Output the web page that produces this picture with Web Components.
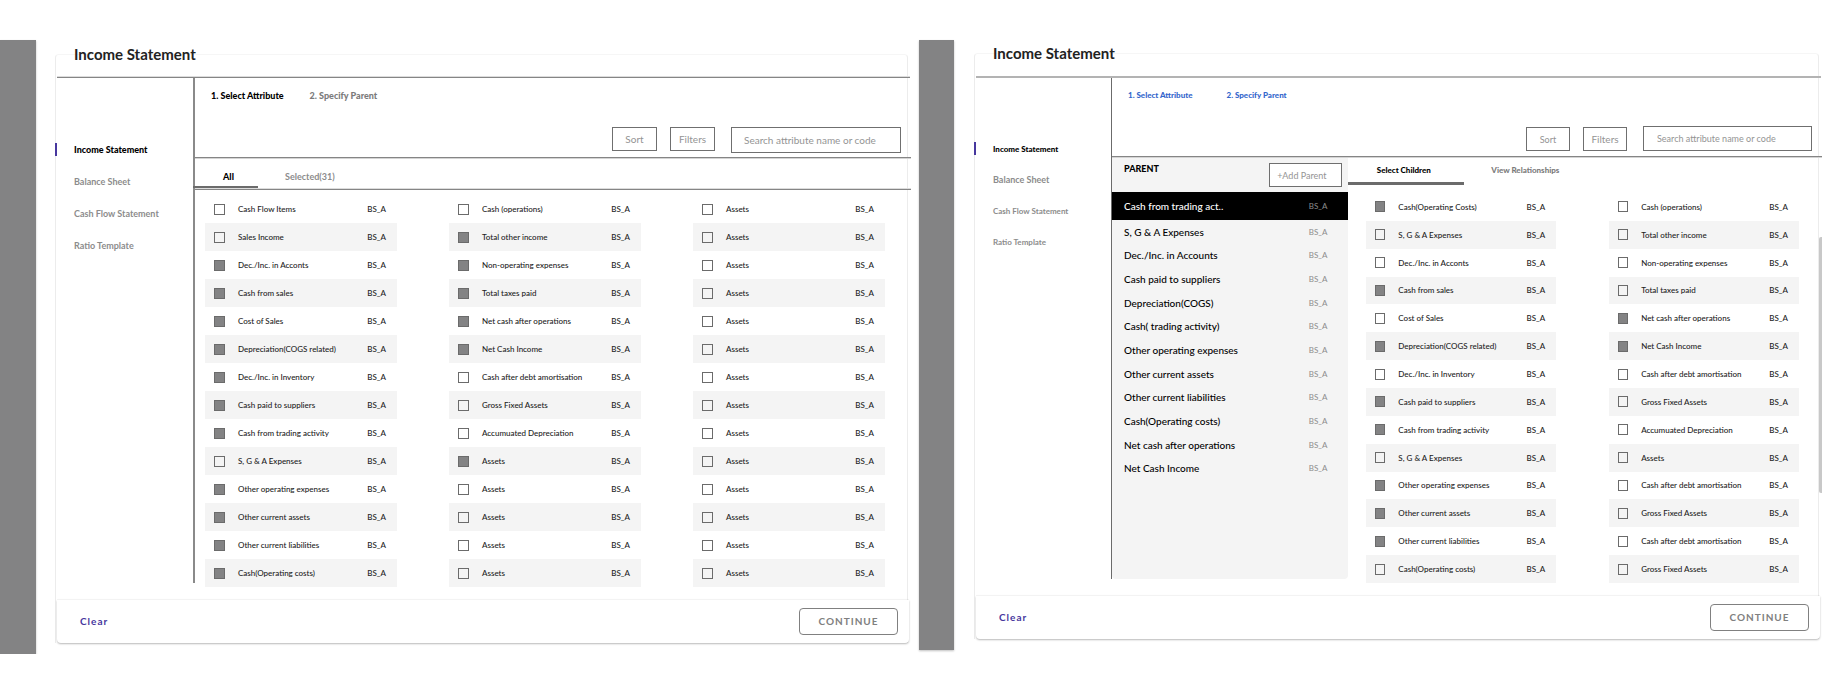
<!doctype html>
<html lang="en">
<head>
<meta charset="utf-8">
<title>Income Statement attributes</title>
<style>
  body { margin: 0; background: #fff; font-family: Lato, "Open Sans", sans-serif; color: #000; }
  main { display: grid; grid-template-columns: 919fr 903fr; align-items: start; padding-top: 40px; }
</style>
</head>
<body>
<main>
  <art-board style="--strip: 36px; --before: 19px; --after: 11px">
    <statement-card style="--top: 14px; --header: 21px; --nav: 137px; --nav-line: 2px; --nav-row: 32px; --steps: 36px">
      <a slot="nav" href="#income" class="active">Income Statement</a>
      <a slot="nav" href="#balance">Balance Sheet</a>
      <a slot="nav" href="#cashflow">Cash Flow Statement</a>
      <a slot="nav" href="#ratio">Ratio Template</a>
      <step-links slot="steps" mode="first"></step-links>
      <tool-bar slot="tools" style="--search-width: 170px; --search-height: 26px; --button: 45px; --align: flex-start; --pad-top: 13px; --pad-bottom: 4px"></tool-bar>
      <attribute-picker></attribute-picker>
    </statement-card>
  </art-board>
  <art-board style="--strip: 35px; --before: 20px; --after: 3px" scroll>
    <statement-card style="--top: 13px; --header: 22px; --nav: 136px; --nav-line: 1px; --nav-row: 31px; --steps: 34px; --header-dark: #b3b3b3; --header-light: #b3b3b3" compact>
      <a slot="nav" href="#income2" class="active">Income Statement</a>
      <a slot="nav" href="#balance2">Balance Sheet</a>
      <a slot="nav" href="#cashflow2" class="small">Cash Flow Statement</a>
      <a slot="nav" href="#ratio2" class="small">Ratio Template</a>
      <step-links slot="steps" mode="links"></step-links>
      <tool-bar slot="tools" compact style="--search-width: 169px; --search-height: 25px; --button: 44px; --align: flex-end; --pad-top: 14px; --pad-bottom: 5px"></tool-bar>
      <parent-editor></parent-editor>
    </statement-card>
  </art-board>
</main>

<script>
const define = (name, render) => customElements.define(name, class extends HTMLElement {
  constructor() { super(); this.attachShadow({ mode: 'open' }); }
  connectedCallback() { this.shadowRoot.innerHTML = render(this); }
});

/* Grey side strip, a card, and an optional scroll thumb in the right gutter */
define('art-board', el => `
  <style>
    :host { display: grid; grid-template-columns: var(--strip) minmax(0, 1fr) var(--after); column-gap: 0; }
    .strip { background: #838384; box-shadow: 0 1px 2px rgba(0,0,0,.25); }
    .body { padding-left: var(--before); }
    .thumb { margin-top: 197px; height: 256px; background: #c8c8c8; border-radius: 2px 0 0 2px; }
  </style>
  <div class="strip"></div>
  <div class="body"><slot></slot></div>
  <div>${el.hasAttribute('scroll') ? '<div class="thumb"></div>' : ''}</div>`);

define('statement-card', () => `
  <style>
    :host { display: block; margin: var(--top) 0 11px; border: 1px solid #ececec; border-top-color: #f6f6f6; border-bottom: 0; border-radius: 4px 4px 0 0; }
    header { height: var(--header); margin: 0 -3px 0 1px; border-bottom: 1px solid var(--header-dark, #858585); box-shadow: inset 0 -1px var(--header-light, #dcdcdc); padding-bottom: 1px; }
    h2 { margin: 0 0 0 17px; font-size: 15px; line-height: 18px; font-weight: 700; color: #222; position: relative; top: -10px; }
    .body { display: grid; grid-template-columns: calc(var(--nav) + var(--nav-line)) minmax(0, 1fr); }
    nav { padding-top: 55px; margin-bottom: 17px; border-right: var(--nav-line) solid #8a8a8a; }
    :host([compact]) nav { border-right-color: #6b6b6b; }
    ::slotted(a) { display: flex; align-items: center; box-sizing: border-box; height: var(--nav-row); padding-left: 18px; font-size: 9px; font-weight: 700; color: #8c8c8c; text-decoration: none; }
    ::slotted(a.active) { height: 13px; margin: calc((var(--nav-row) - 13px) / 2) 0 calc((var(--nav-row) - 13px) / 2) -1px; padding-left: 17px; border-left: 2px solid #47379e; color: #000; font-weight: 900; }
    :host([compact]) ::slotted(a.small), :host([compact]) ::slotted(a.active) { font-size: 8px; }
    .steps { height: var(--steps); }
    footer { display: flex; align-items: center; justify-content: space-between; height: 43px; margin: 0 -2px 0 1px; padding: 0 11px 1px 23px; box-sizing: border-box; background: #fff; border-radius: 0 0 4px 4px; box-shadow: 0 1px 2px rgba(0,0,0,.28), 0 -1px 1px rgba(0,0,0,.04); }
    button { font: 700 10px/12px Lato, sans-serif; letter-spacing: 1px; background: none; padding: 0; border: 0; color: #47379e; }
    button.next { width: 99px; height: 27px; border: 1px solid #808080; border-radius: 4px; color: #808080; }
  </style>
  <header><h2>Income Statement</h2></header>
  <div class="body">
    <nav aria-label="Statements"><slot name="nav"></slot></nav>
    <div>
      <div class="steps"><slot name="steps"></slot></div>
      <slot name="tools"></slot>
      <slot></slot>
    </div>
  </div>
  <footer><button type="button">Clear</button><button type="button" class="next">CONTINUE</button></footer>`);

define('step-links', el => `
  <style>
    :host { display: flex; gap: 26px; padding-left: 16px; line-height: 36px; font-size: 9px; font-weight: 900; }
    :host([mode=links]) { gap: 34px; font-size: 8px; line-height: 34px; }
    a { color: #000; text-decoration: none; }
    a + a { color: #7b7b7b; }
    :host([mode=links]) a { color: #3366cc; }
  </style>
  <a href="#select">1. Select Attribute</a><a href="#specify">2. Specify Parent</a>`);

define('tool-bar', () => `
  <style>
    :host { display: flex; justify-content: flex-end; align-items: var(--align); padding: var(--pad-top) 10px var(--pad-bottom) 0; margin-right: -4px; border-bottom: 1px solid #858585; box-shadow: 0 1px #d4d4d4; margin-bottom: 1px; }
    button, input { box-sizing: border-box; border: 1px solid #6f6f6f; border-radius: 0; background: #fff; color: #949494; font: 400 10px Lato, sans-serif; margin: 0; }
    button { width: var(--button); height: 24px; padding: 0; }
    .sort { margin-right: 13px; }
    input { width: var(--search-width); height: var(--search-height); margin-left: 16px; padding: 0 12px; }
    input::placeholder { color: #949494; opacity: 1; }
    :host([compact]) input, :host([compact]) .sort { font-size: 9px; }
    :host([compact]) input { padding: 0 13px; }
  </style>
  <button type="button" class="sort">Sort</button><button type="button">Filters</button>
  <input type="search" aria-label="Search attribute name or code" placeholder="Search attribute name or code">`);

/* One tick-box row: label on the left, statement code on the right */
define('attribute-row', el => `
  <style>
    :host { display: block; min-height: 0; }
    label { display: flex; align-items: center; height: 100%; padding: 0 11px 0 9px; font-size: 8px; font-weight: 500; line-height: 12px; color: #222; }
    input { appearance: none; box-sizing: border-box; flex: none; width: var(--tick, 11px); height: 11px; margin: 0 13px 0 0; border: 1px solid #6b6b6b; border-radius: 0; background: transparent; }
    input:checked { background: #838384; }
    .name { flex: 1; white-space: nowrap; }
  </style>
  <label><input type="checkbox" ${el.hasAttribute('checked') ? 'checked' : ''}><span class="name">${el.getAttribute('name').replace('&', '&amp;')}</span><span>BS_A</span></label>`);

/* A leading "*" marks a ticked attribute */
const column = names => `<div class="col">${names.map(n =>
  `<attribute-row name="${n.replace('*', '').replace('&', '&amp;')}"${n[0] === '*' ? ' checked' : ''}></attribute-row>`).join('')}</div>`;
const columnStyle = `
  .col { display: grid; grid-auto-rows: var(--row, 28px); }
  .col > :nth-child(even) { background: #f4f4f4; }`;

define('attribute-picker', () => `
  <style>
    :host { display: block; }
    .tabs { display: flex; height: 31px; margin-right: -4px; box-sizing: border-box; border-bottom: 1px solid #858585; box-shadow: inset 0 -1px #dcdcdc; }
    button { border: 0; background: none; padding: 7px 0 0; font: 700 9px/22px Lato, sans-serif; color: #8c8c8c; height: 29px; box-sizing: border-box; }
    .on { width: 65px; margin: 0 27px 0 -2px; color: #000; font-weight: 900; padding-left: 6px; border-bottom: 2px solid #6b6b6b; }
    .list { display: grid; grid-template-columns: repeat(3, minmax(0, 1fr)); column-gap: 52px; padding: 5px 22px 13px 10px; }
    ${columnStyle}
  </style>
  <div class="tabs"><button type="button" class="on">All</button><button type="button">Selected(31)</button></div>
  <div class="list">
    ${column(['Cash Flow Items', 'Sales Income', '*Dec./Inc. in Acconts', '*Cash from sales', '*Cost of Sales', '*Depreciation(COGS related)', '*Dec./Inc. in Inventory', '*Cash paid to suppliers', '*Cash from trading activity', 'S, G & A Expenses', '*Other operating expenses', '*Other current assets', '*Other current liabilities', '*Cash(Operating costs)'])}
    ${column(['Cash (operations)', '*Total other income', '*Non-operating expenses', '*Total taxes paid', '*Net cash after operations', '*Net Cash Income', 'Cash after debt amortisation', 'Gross Fixed Assets', 'Accumuated Depreciation', '*Assets', 'Assets', 'Assets', 'Assets', 'Assets'])}
    ${column(Array(14).fill('Assets'))}
  </div>`);

define('parent-editor', () => `
  <style>
    :host { display: grid; grid-template-columns: minmax(0, 236fr) minmax(0, 469fr); }
    .parents { min-height: 421px; margin-bottom: 17px; background: #f4f4f4; border-radius: 0 0 4px 4px; }
    .head { display: flex; justify-content: space-between; align-items: flex-start; height: 34px; padding: 5px 6px 0 12px; box-sizing: border-box; }
    h3 { margin: 0; font-size: 9px; line-height: 11px; font-weight: 900; }
    .add { width: 73px; height: 24px; padding: 0 8px 0 0; border: 1px solid #6f6f6f; background: #fff; color: #949494; font: 400 9px Lato, sans-serif; }
    ul { list-style: none; margin: 0; padding: 0; display: grid; grid-template-rows: 28px; grid-auto-rows: minmax(0, 1fr); height: 288px; }
    li button { display: flex; align-items: center; justify-content: space-between; width: 100%; height: 100%; padding: 0 21px 0 12px; border: 0; background: none; color: #000; font: 500 10px Lato, sans-serif; }
    li span { font-size: 8px; font-weight: 400; color: #8c8c8c; }
    li:first-child button { background: #000; color: #fff; }
    .children { display: flex; flex-direction: column; padding-bottom: 13px; }
    .tabs { display: flex; height: 27px; }
    .tabs button { width: 116px; height: 27px; padding: 0; border: 0; border-bottom: 3px solid transparent; background: none; color: #7b7b7b; font: 900 8px Lato, sans-serif; }
    .tabs .on { color: #000; border-bottom-color: #6b6b6b; margin-right: 3px; padding-right: 5px; }
    .list { flex: 1; display: grid; grid-template-columns: repeat(2, minmax(0, 1fr)); column-gap: 53px; padding: 8px 19px 0 18px; --row: minmax(0, 1fr); --tick: 10px; }
    ${columnStyle}
  </style>
  <section class="parents">
    <div class="head"><h3>PARENT</h3><button type="button" class="add">+Add Parent</button></div>
    <ul>${['Cash from trading act..', 'S, G &amp; A Expenses', 'Dec./Inc. in Accounts', 'Cash paid to suppliers', 'Depreciation(COGS)', 'Cash( trading activity)', 'Other operating expenses', 'Other current assets', 'Other current liabilities', 'Cash(Operating costs)', 'Net cash after operations', 'Net Cash Income']
      .map(n => `<li><button type="button">${n}<span>BS_A</span></button></li>`).join('')}</ul>
  </section>
  <section class="children">
    <div class="tabs"><button type="button" class="on">Select Children</button><button type="button">View Relationships</button></div>
    <div class="list">
      ${column(['*Cash(Operating Costs)', 'S, G & A Expenses', 'Dec./Inc. in Acconts', '*Cash from sales', 'Cost of Sales', '*Depreciation(COGS related)', 'Dec./Inc. in Inventory', '*Cash paid to suppliers', '*Cash from trading activity', 'S, G & A Expenses', '*Other operating expenses', '*Other current assets', '*Other current liabilities', 'Cash(Operating costs)'])}
      ${column(['Cash (operations)', 'Total other income', 'Non-operating expenses', 'Total taxes paid', '*Net cash after operations', '*Net Cash Income', 'Cash after debt amortisation', 'Gross Fixed Assets', 'Accumuated Depreciation', 'Assets', 'Cash after debt amortisation', 'Gross Fixed Assets', 'Cash after debt amortisation', 'Gross Fixed Assets'])}
    </div>
  </section>`);
</script>
</body>
</html>
